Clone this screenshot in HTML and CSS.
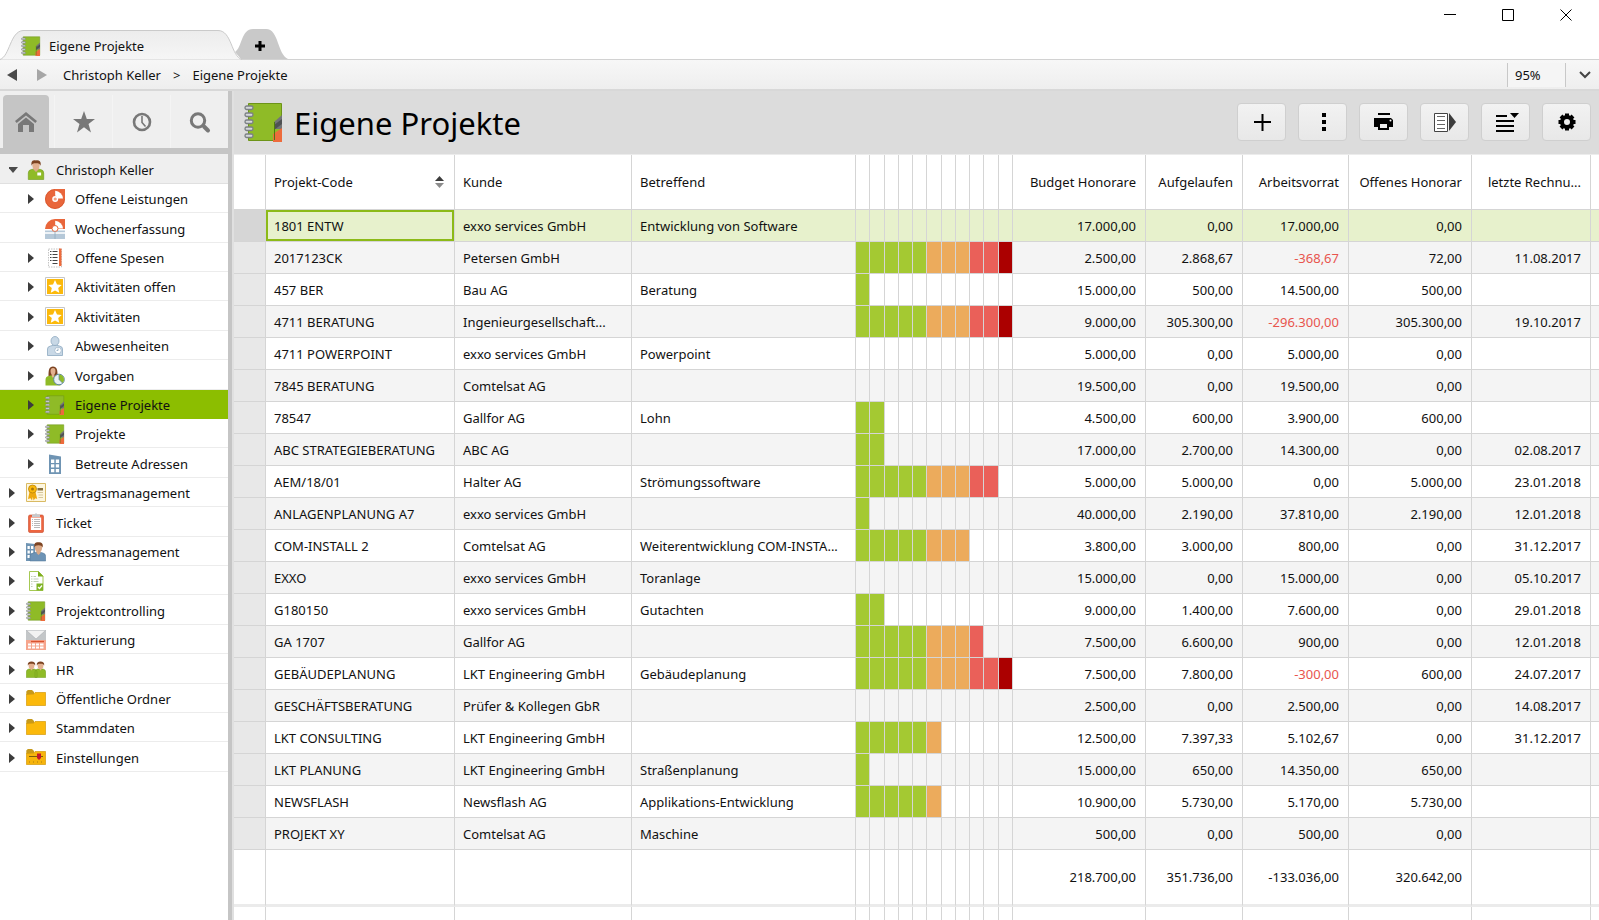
FILE: index.html
```html
<!DOCTYPE html>
<html lang="de">
<head>
    <meta charset="UTF-8">
    <meta name="viewport" content="width=device-width, initial-scale=1.0">
    <title>Eigene Projekte</title>
    <link rel="stylesheet" href="styles.css">
</head>
<body>
    <!-- Icon sprite -->
    <svg class="sprite" aria-hidden="true">
        <symbol id="i-book" viewBox="0 0 40 40">
            <path fill="#8fbb27" stroke="#6d9418" d="M4.500 1.500h33v37h-33z"/>
            <path fill="#737577" d="M38 13v14h-8v-7z"/>
            <path fill="#4f5254" d="M38 17v5l-8 6v-5z"/>
            <path fill="#ed6b3c" d="M38 26v14h-9v-8z"/>
            <path fill="none" stroke="#4e7a10" d="M30.500 20v18"/>
            <g fill="#d5d8da" stroke="#7b8084" stroke-width="1.300">
                <rect x="1" y="4" width="8" height="3.500" rx="1.700"/>
                <rect x="1" y="11" width="8" height="3.500" rx="1.700"/>
                <rect x="1" y="18" width="8" height="3.500" rx="1.700"/>
                <rect x="1" y="25" width="8" height="3.500" rx="1.700"/>
                <rect x="1" y="32" width="8" height="3.500" rx="1.700"/>
            </g>
        </symbol>
        <symbol id="i-person" viewBox="0 0 20 20">
            <path fill="#8fbb27" stroke="#6f9a1a" stroke-width=".6" d="M2.300 19.500V13q0-3 3-3.500l3-.5h3.400l3 .5q3 .5 3 3.500v6.500z"/>
            <path fill="#dba987" d="M7.500 7h5v2.500L10 12 7.500 9.500z"/>
            <ellipse cx="10" cy="5.500" rx="3.600" ry="4.200" fill="#e2b08f"/>
            <path fill="#7c4321" d="M5.600 5.800C4.500-.5 8.500 0 10 .4c4-.6 5.400 2 4.400 5.400-.6-2-1.500-2.600-4.400-2.600s-3.800.6-4.400 2.600z"/>
            <path fill="#fff" d="M11.300 12.500h3.800v3h-3.800z"/>
        </symbol>
        <symbol id="i-pie" viewBox="0 0 20 20">
            <path fill="#e9663b" d="M10 0h10v10a10 10 0 1 1-10-10z"/>
            <path fill="#fff" d="M10.200 1.800A8.200 8.200 0 0 1 18 9.500h-5l-2.800-3z"/>
            <path fill="none" stroke="#cf4f27" stroke-width=".6" d="M10 .5a9.500 9.500 0 1 0 9.500 9.500"/>
            <circle cx="10.200" cy="10" r="3" fill="#fff"/>
            <circle cx="10.200" cy="10" r="1.600" fill="#f0a48a"/>
        </symbol>
        <symbol id="i-week" viewBox="0 0 20 20">
            <path fill="#e9663b" d="M10 0h10v10H0A10 10 0 0 1 10 0z"/>
            <path fill="#fff" d="M10.200 1.800A8.200 8.200 0 0 1 18 9.500h-5l-2.800-3z"/>
            <path fill="#b5c8d8" d="M0 10h20v10H0z"/>
            <path fill="#fff" d="M0 10h20v1.400H0zM0 13.200h20v1.600H0z"/>
            <circle cx="10" cy="9.500" r="3" fill="#fff" stroke="#e9663b"/>
            <path fill="none" stroke="#8fa9bd" stroke-width=".8" d="M10 12v8"/>
        </symbol>
        <symbol id="i-receipt" viewBox="0 0 20 20">
            <path fill="#fff" stroke="#b5b5b5" stroke-width=".8" stroke-dasharray="1.500 1" d="M3.500 1h13v18h-13z"/>
            <path fill="#ed6b3c" d="M14 .5h2.500V18H14z"/>
            <path stroke="#444" d="M5 3.500h1.500M7.500 3.500h5M5 6.500h1.500M7.500 6.500h5M5 9.500h1.500M7.500 9.500h5M5 12.500h1.500M7.500 12.500h5M7.500 15.500h5"/>
        </symbol>
        <symbol id="i-star" viewBox="0 0 20 20">
            <path fill="#fff" stroke="#c6c6c6" d="M.5.5h19v18H.5z"/>
            <path fill="#fbb90b" d="M2 2h16v15H2z"/>
            <path fill="#fff" d="m10 3 2 4.400 4.700.5-3.500 3.200 1 4.700L10 13.400l-4.200 2.400 1-4.700L3.300 7.900 8 7.400z"/>
        </symbol>
        <symbol id="i-absent" viewBox="0 0 20 20">
            <path fill="#c8d8e6" stroke="#8ea9c0" stroke-width=".8" d="M2.500 19.500V13q0-2.500 3-3l2.700-.7h3.600l2.700.7q3 .5 3 3v6.500z"/>
            <ellipse cx="10" cy="5" rx="4" ry="4.500" fill="#c8d8e6" stroke="#8ea9c0" stroke-width=".8"/>
            <circle cx="13" cy="14.500" r="3.300" fill="#fff" stroke="#9fb6ca" stroke-width=".8"/>
            <path fill="none" stroke="#8ea9c0" stroke-width=".9" d="M13 12.500v2h-1.500"/>
        </symbol>
        <symbol id="i-target" viewBox="0 0 20 20">
            <path fill="#7c4321" d="M3.500 10C3.500 4 4 .5 8 .5S12.500 4 12.500 10z"/>
            <path fill="#8fbb27" d="M.5 19.500V14q0-3.500 3-4l2-.5h5l2 .5q3 .5 3 4v5.500z"/>
            <path fill="#e2b08f" d="M5.500 5q0-3 2.500-3t2.500 3q0 2.500-1.300 4v1.500L8 12l-1.200-1.500V9Q5.500 7.500 5.500 5z"/>
            <circle cx="14" cy="13.500" r="5.300" fill="#e9f1f5" stroke="#5f86a0"/>
            <path fill="#8fbb27" d="M14 8.500a5 5 0 0 1 3.500 8.500L14 13.500z"/>
            <path fill="none" stroke="#5f86a0" stroke-width=".7" d="M14 9v4.500l3.500 3.500"/>
        </symbol>
        <symbol id="i-building" viewBox="0 0 20 20">
            <path fill="#6f94b3" d="m4 .5 12 2V20H4z"/>
            <path fill="#fff" d="M6 5.500h3.300V9H6zM10.800 5.500h3.300V9h-3.300zM6 10.300h3.300v3.200H6zM10.800 10.300h3.300v3.200h-3.300zM6 15h3.300v3.200H6zM10.800 15h3.300v3.200h-3.300z"/>
        </symbol>
        <symbol id="i-contract" viewBox="0 0 20 20">
            <path fill="#fdf6df" stroke="#d9ba63" d="M.5.5h19v18H.5z"/>
            <path fill="#eda80e" d="M3.500 9 2 16l2.500-.8L6 17.500l.8-3.500.8 3.500 1.600-2.300 2 .8L9.500 9z"/>
            <circle cx="6.500" cy="6" r="4" fill="#fbb90b" stroke="#b98309" stroke-width=".8"/>
            <circle cx="6.500" cy="6" r="1.500" fill="#a8770a"/>
            <path fill="#86703f" d="M11.500 5H17v2.500h-5.500z"/>
            <path stroke="#d6c69a" d="M11.500 9.500H17M12.500 12H17M12.500 14.500H17"/>
        </symbol>
        <symbol id="i-ticket" viewBox="0 0 20 20">
            <rect x="2.500" y="2" width="15" height="17.500" rx="1.500" fill="#ed6540" stroke="#c9492a" stroke-width=".6"/>
            <path fill="#fff" d="M4.800 4.500h10.400V17H4.800z"/>
            <path fill="#c5c9cc" d="M6 1.500h2.500L10 0l1.500 1.500H14V4H6z"/>
            <path stroke="#a7a7a7" stroke-width=".8" d="M6 6.500h1M8 6.500h6M6 8.500h1M8 8.500h6M6 10.500h1M8 10.500h6M6 12.500h1M8 12.500h6M8 14.500h6"/>
        </symbol>
        <symbol id="i-address" viewBox="0 0 20 20">
            <path fill="#6f94b3" d="m0 1 9 1v17H0z"/>
            <path fill="#fff" d="M1.500 4h2.300v3H1.500zM5 4h2.300v3H5zM1.500 8.500h2.300v3H1.500zM5 8.500h2.300v3H5zM1.500 13h2.300v3H1.500z"/>
            <path fill="#6d93b5" stroke="#4f7595" stroke-width=".5" d="M4 19v-4.500q0-3 3-3.500l3.500-1h3L17 11q2.700.5 2.700 3.500V19z"/>
            <ellipse cx="12.500" cy="5.500" rx="3.600" ry="4.500" fill="#dba987"/>
            <path fill="#dba987" d="M10.500 8.500h4V11l-2 2-2-2z"/>
            <path fill="#7c4321" d="M8.500 5.500C7.500-.5 11 0 12.500.3c3.500-.5 5 2 4 5.200-.6-1.600-1.400-2.300-4-2.300s-3.400.7-4 2.300z"/>
        </symbol>
        <symbol id="i-sale" viewBox="0 0 20 20">
            <path fill="#fff" stroke="#8fbb27" stroke-width=".8" d="M3.500.5h9L17 5v14.500H3.500z"/>
            <path fill="#7fae1d" d="M12 0v5.500h5.500z"/>
            <path stroke="#b8c7ad" stroke-width=".9" d="M5 5.500h1.500M7.500 5.500H10M5 8h1.500M7.500 8h5M5 10.500h1.500M7.500 10.500h5M5 13h1.500M5 15.500h1.500"/>
            <path fill="#7fb326" d="M10.500 12.500H17v7h-6.500z"/>
            <path fill="none" stroke="#fff" stroke-width="1.200" d="m12 16 1.500 1.500 2.500-3"/>
        </symbol>
        <symbol id="i-invoice" viewBox="0 0 20 20">
            <path fill="#f6a58d" d="M0 10h20v10H0z"/>
            <path fill="#f2f2f2" d="M0 0h20v10H0z"/>
            <path fill="#c3c6c8" d="m0 0 10 9L20 0v10H0z"/>
            <path fill="none" stroke="#a9adb0" stroke-width=".6" d="M.3.300h19.400L10 9z"/>
            <path stroke="#d9532f" stroke-width="1.300" d="M5 11.500h13"/>
            <path fill="#fff" d="M2 13.500h3v2H2zM6 13.500h3v2H6zM10 13.500h3v2h-3zM14 13.500h3.500v2H14zM2 16.500h3v2H2zM6 16.500h3v2H6zM10 16.500h3v2h-3zM14 16.500h3.500v2H14z"/>
        </symbol>
        <symbol id="i-hr" viewBox="0 0 20 20">
            <path fill="#8fbb27" stroke="#6f9a1a" stroke-width=".5" d="M.3 17.500V12q0-2.500 2.500-3h5.500Q11 9.500 11 12v5.500zM9 17.500V12q0-2.500 2.500-3h5.500q2.700.5 2.700 3v5.500z"/>
            <path fill="#e2b08f" d="M2.500 5.500Q2.500 2.500 5.500 2.500T8.500 5.500 6.800 9L5.500 10.500 4.200 9Q2.500 8 2.500 5.500zM11.500 5.500q0-3 3-3t3 3T15.800 9l-1.300 1.500L13.200 9q-1.700-1-1.700-3.500z"/>
            <path fill="#7c4321" d="M1.800 5.500C1.500 2.500 3 1.500 5.500 1.500s4 1 3.700 4C8.500 4 7.500 3.700 5.500 3.700S2.500 4 1.800 5.500zM10.800 5.500c-.3-3 1.200-4 3.700-4s4 1 3.700 4c-.7-1.500-1.700-1.800-3.700-1.800s-3 .3-3.700 1.800z"/>
        </symbol>
        <symbol id="i-folder" viewBox="0 0 20 20">
            <path fill="#c79a1b" d="M.3 4V2.500L1.800 1H6l2 2v3H.3z"/>
            <path fill="#fbb90b" stroke="#d39a0b" stroke-width=".7" d="M.4 5.500 8 5l1-1.500h10.600v13H.4z"/>
        </symbol>
        <symbol id="i-settings" viewBox="0 0 20 20">
            <path fill="#c79a1b" d="M.3 4V2.500L1.800 1H6l2 2v3H.3z"/>
            <path fill="#f6b40c" stroke="#d39a0b" stroke-width=".7" d="M.4 5.500 8 5l1-1.500h10.600v13H.4z"/>
            <path stroke="#7a5c0e" d="M3 8.500h14"/>
            <path stroke="#a87d10" stroke-dasharray="1 3" d="M3 14h14"/>
            <path fill="#c4172c" d="M11 5.500h4v4.500l-2 2-2-2z"/>
        </symbol>
        <symbol id="i-right" viewBox="0 0 12 12">
            <path fill="#3c3c3c" d="M0 1v10l6-5z"/>
        </symbol>
        <symbol id="i-down" viewBox="0 0 12 12">
            <path fill="#4a4a4a" d="M-1 3H9L4 9z"/>
        </symbol>
    </svg>

    <div class="app">
        <header class="titlebar">
            <div class="tabs">
                <a class="tab" href="#">
                    <svg class="tab-shape" width="244" height="30" viewBox="0 0 244 30">
                        <defs>
                            <linearGradient id="tabFill" x1="0" y1="0" x2="0" y2="1">
                                <stop offset="0" stop-color="#ececec"/>
                                <stop offset="1" stop-color="#f6f6f6"/>
                            </linearGradient>
                        </defs>
                        <path fill="url(#tabFill)" stroke="#cacaca" d="M0 29.500C10 26 10 1.500 23 .5H218c14 0 13 26 24 29"/>
                    </svg>
                    <svg class="icon" aria-hidden="true"><use href="#i-book"/></svg>
                    <span>Eigene Projekte</span>
                </a>
                <button class="tab-add" aria-label="Neuer Tab">
                    <svg width="54" height="30" viewBox="0 0 54 30">
                        <path fill="#c9c9c9" d="M0 23C7 19 6 0 18 0h13c13 0 11 25 22 30H6z"/>
                        <path stroke="#000" stroke-width="3" d="M20 17h10M25 12v10"/>
                    </svg>
                </button>
            </div>
            <div class="window-controls">
                <button aria-label="Minimieren"><svg width="13" height="13"><path d="M0 5.500h12"/></svg></button>
                <button aria-label="Maximieren"><svg width="13" height="13"><path d="M.5.500h11v11H.5z"/></svg></button>
                <button aria-label="Schließen"><svg width="13" height="13"><path d="m.5.500 11 11M11.500.5l-11 11"/></svg></button>
            </div>
        </header>

        <nav class="breadcrumb">
            <button class="history" aria-label="Zurück"><svg width="10" height="12"><path fill="#4a4a4a" d="M10 0v12L0 6z"/></svg></button>
            <button class="history" aria-label="Vorwärts"><svg width="10" height="12"><path fill="#a6a6a6" d="M0 0v12l10-6z"/></svg></button>
            <a class="crumb" href="#">Christoph Keller</a>
            <span class="crumb-sep">&gt;</span>
            <a class="crumb" href="#">Eigene Projekte</a>
            <input class="zoom-level" type="text" value="95%" aria-label="Zoom">
            <button class="zoom-open" aria-label="Zoom wählen"><svg width="12" height="8"><path fill="none" stroke="#444" stroke-width="2" d="m1 1 5 5 5-5"/></svg></button>
        </nav>

        <div class="workspace">
            <aside class="sidebar">
                <div class="modes">
                    <button class="mode active" aria-label="Start">
                        <svg width="24" height="24" fill="#787878"><path d="m12 2 11 9-1.700 2L12 5.500 2.700 13 1 11z"/><path d="m4 14 8-6.500 8 6.500v8h-5v-7H9v7H4z"/></svg>
                    </button>
                    <button class="mode" aria-label="Favoriten">
                        <svg width="24" height="24" fill="#787878"><path d="m12 1 2.800 8H23l-6.500 5 2.500 8.500-7-5.200-7 5.200L7.500 14 1 9h8.200z"/></svg>
                    </button>
                    <button class="mode" aria-label="Verlauf">
                        <svg width="24" height="24" fill="none" stroke="#787878"><circle cx="12" cy="12" r="8" stroke-width="2.600"/><path stroke-width="1.600" d="M12 6v6.500l3.500 4"/></svg>
                    </button>
                    <button class="mode" aria-label="Suche">
                        <svg width="24" height="24" fill="none" stroke="#787878"><circle cx="10" cy="10.500" r="6.700" stroke-width="3"/><path stroke-width="4" stroke-linecap="round" d="m16 16.500 4 4"/></svg>
                    </button>
                </div>
                <ul class="tree" id="tree"></ul>
            </aside>

            <main class="content">
                <div class="page-head">
                    <svg class="page-icon" aria-hidden="true"><use href="#i-book"/></svg>
                    <h1>Eigene Projekte</h1>
                    <div class="tools">
                        <button aria-label="Neu"><svg width="24" height="24"><path stroke="#000" stroke-width="2" d="M4 12h17M12.500 4v17"/></svg></button>
                        <button aria-label="Mehr"><svg width="24" height="24"><path d="M11 3h4v4h-4zM11 10h4v4h-4zM11 17h4v4h-4z"/></svg></button>
                        <button aria-label="Drucken"><svg width="24" height="24"><path d="M6 3h12v2H6zM2 8h17l2 2v7h-4v-3H6v3H2z"/><path fill="#eee" stroke="#000" stroke-width="2" d="M7 13h9v6H7z"/><circle cx="18.500" cy="10.500" r="1" fill="#fff"/></svg></button>
                        <button aria-label="Export"><svg width="24" height="24"><path fill="#fff" stroke="#444" d="M1.500 3.500h13v18h-13z"/><path stroke="#666" d="M4 6.500h8M4 10.500h8M4 14.500h8M4 18.500h8"/><path fill="#3c3c3c" d="m16 3 7 9-7 9z"/></svg></button>
                        <button aria-label="Ansicht"><svg width="24" height="24"><path stroke="#000" stroke-width="2" d="M2 6h11M2 11h18M2 16h18M2 21h18"/><path d="M16 3h9l-4.500 5z"/></svg></button>
                        <button aria-label="Einstellungen"><svg width="24" height="24"><circle cx="12" cy="12" r="5" fill="none" stroke="#000" stroke-width="4"/><g stroke="#000" stroke-width="4"><path d="M12 3.500v3M12 17.500v3M3.500 12h3M17.500 12h3M6 6l2 2M16 16l2 2M18 6l-2 2M8 16l-2 2"/></g></svg></button>
                    </div>
                </div>

                <div class="grid-wrap">
                    <table class="grid">
                        <colgroup>
                            <col class="c-mark"><col class="c-code"><col class="c-kunde"><col>
                            <col class="c-bar"><col class="c-bar wide"><col class="c-bar"><col class="c-bar"><col class="c-bar"><col class="c-bar wide"><col class="c-bar"><col class="c-bar"><col class="c-bar"><col class="c-bar wide"><col class="c-bar">
                            <col class="c-budget"><col class="c-spent"><col class="c-stock"><col class="c-open"><col class="c-date"><col class="c-end">
                        </colgroup>
                        <thead>
                            <tr>
                                <td></td>
                                <th class="sorted">
                                    <button>Projekt-Code
                                        <svg width="9" height="12"><path fill="#3c3c3c" d="M0 5h9L4.500 0z"/><path fill="#8c8c8c" d="M0 7h9l-4.500 5z"/></svg>
                                    </button>
                                </th>
                                <th>Kunde</th>
                                <th>Betreffend</th>
                                <td></td><td></td><td></td><td></td><td></td><td></td><td></td><td></td><td></td><td></td><td></td>
                                <th class="num">Budget Honorare</th>
                                <th class="num">Aufgelaufen</th>
                                <th class="num">Arbeitsvorrat</th>
                                <th class="num">Offenes Honorar</th>
                                <th class="num">letzte Rechnu...</th>
                                <td></td>
                            </tr>
                        </thead>
                        <tbody id="rows"></tbody>
                        <tfoot>
                            <tr class="totals">
                                <td></td><td></td><td></td><td></td>
                                <td></td><td></td><td></td><td></td><td></td><td></td><td></td><td></td><td></td><td></td><td></td>
                                <td class="num">218.700,00</td>
                                <td class="num">351.736,00</td>
                                <td class="num">-133.036,00</td>
                                <td class="num">320.642,00</td>
                                <td></td><td></td>
                            </tr>
                            <tr class="rest">
                                <td></td><td></td><td></td><td></td>
                                <td></td><td></td><td></td><td></td><td></td><td></td><td></td><td></td><td></td><td></td><td></td>
                                <td></td><td></td><td></td><td></td><td></td><td></td>
                            </tr>
                        </tfoot>
                    </table>
                </div>
            </main>
        </div>
    </div>

    <script>
        // level, icon, label, arrow
        const nodes = [
            [0, 'person', 'Christoph Keller', 'down'],
            [1, 'pie', 'Offene Leistungen', 'right'],
            [1, 'week', 'Wochenerfassung', ''],
            [1, 'receipt', 'Offene Spesen', 'right'],
            [1, 'star', 'Aktivitäten offen', 'right'],
            [1, 'star', 'Aktivitäten', 'right'],
            [1, 'absent', 'Abwesenheiten', 'right'],
            [1, 'target', 'Vorgaben', 'right'],
            [1, 'book', 'Eigene Projekte', 'right'],
            [1, 'book', 'Projekte', 'right'],
            [1, 'building', 'Betreute Adressen', 'right'],
            [0, 'contract', 'Vertragsmanagement', 'right'],
            [0, 'ticket', 'Ticket', 'right'],
            [0, 'address', 'Adressmanagement', 'right'],
            [0, 'sale', 'Verkauf', 'right'],
            [0, 'book', 'Projektcontrolling', 'right'],
            [0, 'invoice', 'Fakturierung', 'right'],
            [0, 'hr', 'HR', 'right'],
            [0, 'folder', 'Öffentliche Ordner', 'right'],
            [0, 'folder', 'Stammdaten', 'right'],
            [0, 'settings', 'Einstellungen', 'right']
        ];

        // code, kunde, betreffend, filled bars, budget, aufgelaufen, vorrat, offen, rechnung
        const projects = [
            ['1801 ENTW', 'exxo services GmbH', 'Entwicklung von Software', 0, '17.000,00', '0,00', '17.000,00', '0,00', ''],
            ['2017123CK', 'Petersen GmbH', '', 11, '2.500,00', '2.868,67', '-368,67', '72,00', '11.08.2017'],
            ['457 BER', 'Bau AG', 'Beratung', 1, '15.000,00', '500,00', '14.500,00', '500,00', ''],
            ['4711 BERATUNG', 'Ingenieurgesellschaft...', '', 11, '9.000,00', '305.300,00', '-296.300,00', '305.300,00', '19.10.2017'],
            ['4711 POWERPOINT', 'exxo services GmbH', 'Powerpoint', 0, '5.000,00', '0,00', '5.000,00', '0,00', ''],
            ['7845 BERATUNG', 'Comtelsat AG', '', 0, '19.500,00', '0,00', '19.500,00', '0,00', ''],
            ['78547', 'Gallfor AG', 'Lohn', 2, '4.500,00', '600,00', '3.900,00', '600,00', ''],
            ['ABC STRATEGIEBERATUNG', 'ABC AG', '', 2, '17.000,00', '2.700,00', '14.300,00', '0,00', '02.08.2017'],
            ['AEM/18/01', 'Halter AG', 'Strömungssoftware', 10, '5.000,00', '5.000,00', '0,00', '5.000,00', '23.01.2018'],
            ['ANLAGENPLANUNG A7', 'exxo services GmbH', '', 1, '40.000,00', '2.190,00', '37.810,00', '2.190,00', '12.01.2018'],
            ['COM-INSTALL 2', 'Comtelsat AG', 'Weiterentwicklung COM-INSTA...', 8, '3.800,00', '3.000,00', '800,00', '0,00', '31.12.2017'],
            ['EXXO', 'exxo services GmbH', 'Toranlage', 0, '15.000,00', '0,00', '15.000,00', '0,00', '05.10.2017'],
            ['G180150', 'exxo services GmbH', 'Gutachten', 2, '9.000,00', '1.400,00', '7.600,00', '0,00', '29.01.2018'],
            ['GA 1707', 'Gallfor AG', '', 9, '7.500,00', '6.600,00', '900,00', '0,00', '12.01.2018'],
            ['GEBÄUDEPLANUNG', 'LKT Engineering GmbH', 'Gebäudeplanung', 11, '7.500,00', '7.800,00', '-300,00', '600,00', '24.07.2017'],
            ['GESCHÄFTSBERATUNG', 'Prüfer & Kollegen GbR', '', 0, '2.500,00', '0,00', '2.500,00', '0,00', '14.08.2017'],
            ['LKT CONSULTING', 'LKT Engineering GmbH', '', 6, '12.500,00', '7.397,33', '5.102,67', '0,00', '31.12.2017'],
            ['LKT PLANUNG', 'LKT Engineering GmbH', 'Straßenplanung', 1, '15.000,00', '650,00', '14.350,00', '650,00', ''],
            ['NEWSFLASH', 'Newsflash AG', 'Applikations-Entwicklung', 6, '10.900,00', '5.730,00', '5.170,00', '5.730,00', ''],
            ['PROJEKT XY', 'Comtelsat AG', 'Maschine', 0, '500,00', '0,00', '500,00', '0,00', '']
        ];

        const barColor = (i) => i < 5 ? 'green' : i < 8 ? 'orange' : i < 10 ? 'red' : 'dark';
        const esc = (text) => text.replace('&', '&amp;');

        document.getElementById('tree').innerHTML = nodes.map(([level, icon, label, arrow], i) => {
            const toggle = arrow
                ? `<button class="toggle" aria-label="${label} aufklappen"><svg width="12" height="12"><use href="#i-${arrow}"/></svg></button>`
                : '<span class="toggle"></span>';
            const classes = ['node', level ? 'sub' : '', i === 0 ? 'root' : '', i === 8 ? 'selected' : ''];
            return `<li class="${classes.join(' ').trim()}">${toggle}<a href="#"><svg class="icon"><use href="#i-${icon}"/></svg>${label}</a></li>`;
        }).join('');

        document.getElementById('rows').innerHTML = projects.map((p) => {
            const [code, kunde, text, filled, ...values] = p;
            let bars = '';
            for (let i = 0; i < 11; i++) {
                bars += i < filled ? `<td class="${barColor(i)}"></td>` : '<td></td>';
            }
            const nums = values.map((v) => `<td class="num${v.startsWith('-') ? ' negative' : ''}">${v}</td>`).join('');
            return `<tr><td class="mark"></td><td>${code}</td><td>${esc(kunde)}</td><td>${text}</td>${bars}${nums}<td></td></tr>`;
        }).join('');
    </script>
</body>
</html>
```
FILE: styles.css
```css
* {
    box-sizing: border-box;
}

body {
    margin: 0;
    font-family: "Noto Sans", "Open Sans", sans-serif;
    font-size: 13px;
    color: #111;
    background: #fff;
    overflow: hidden;
}

a {
    color: inherit;
    text-decoration: none;
}

button {
    margin: 0;
    padding: 0;
    border: none;
    background: none;
    font: inherit;
    color: inherit;
    cursor: pointer;
}

svg {
    display: block;
    overflow: visible;
}

.sprite {
    position: absolute;
    width: 0;
    height: 0;
}

.icon {
    width: 20px;
    height: 20px;
    flex: none;
}

.app {
    display: flex;
    flex-direction: column;
    height: 100vh;
}

/* Title bar */
.titlebar {
    display: flex;
    justify-content: space-between;
    height: 60px;
    border-bottom: 1px solid #d2d2d2;
}

.tabs {
    display: flex;
    align-items: flex-end;
}

.tab {
    position: relative;
    display: flex;
    align-items: center;
    gap: 8px;
    width: 235px;
    height: 30px;
    padding: 2px 0 0 21px;
    margin-bottom: -1px;
    z-index: 1;
}

.tab-shape {
    position: absolute;
    left: 0;
    top: 0;
    z-index: -1;
}

.window-controls {
    display: flex;
    align-items: flex-start;
}

.window-controls button {
    display: flex;
    justify-content: center;
    width: 58px;
    padding-top: 9px;
}

.window-controls button:last-child {
    margin-right: 4px;
}

.window-controls path {
    fill: none;
    stroke: #000;
}

/* Breadcrumb */
.breadcrumb {
    display: flex;
    align-items: center;
    height: 31px;
    background: linear-gradient(#f7f7f7, #eee);
    border-bottom: 2px solid #d8d8d8;
}

.history {
    display: flex;
    justify-content: center;
    width: 30px;
    padding-right: 6px;
}

.crumb:first-of-type {
    padding-left: 3px;
}

.crumb-sep {
    padding: 0 12px;
}

.zoom-level {
    width: 59px;
    height: 24px;
    margin-left: auto;
    padding: 0 7px;
    border: 1px solid #c8c8c8;
    border-width: 0 1px;
    background: #f5f5f5;
    font: inherit;
    color: inherit;
}

.zoom-open {
    display: flex;
    justify-content: center;
    width: 33px;
    padding-left: 4px;
}

/* Sidebar */
.workspace {
    display: flex;
    flex: 1;
    min-height: 0;
}

.sidebar {
    flex: none;
    width: 234px;
    border-right: 2px solid #e0e0e0;
    box-shadow: inset -4px 0 #c5c5c5;
    padding-right: 4px;
}

.modes {
    display: grid;
    grid-template-columns: 54px repeat(3, 1fr);
    height: 63px;
    padding-top: 4px;
    background: #efefef;
    border-bottom: 6px solid #c5c5c5;
}

.mode {
    display: flex;
    align-items: center;
    justify-content: center;
    border-left: 1px solid #f4f4f4;
}

.mode.active {
    margin: 0 5px 0 3px;
    background: #c5c5c5;
    border: none;
    border-radius: 4px 4px 0 0;
}

.tree {
    margin: 0;
    padding: 0;
    list-style: none;
}

.node {
    display: flex;
    align-items: center;
    height: 29px;
    padding: 2px 0 0 9px;
    border-bottom: 1px solid #ececec;
}

.node:nth-child(5n+1),
.node:nth-child(5n+3) {
    height: 30px;
}

.node.sub {
    padding-left: 28px;
}

.node.root {
    background: #efefef;
    border-bottom-color: #e0e0e0;
}

.node.selected {
    background: #8cbe00;
    border-bottom-color: #8cbe00;
}

.node a {
    display: flex;
    align-items: center;
    gap: 10px;
}

.toggle {
    width: 17px;
}

/* Page header */
.content {
    display: flex;
    flex-direction: column;
    flex: 1;
    min-width: 0;
}

.page-head {
    display: flex;
    align-items: center;
    flex: none;
    height: 64px;
    padding: 0 8px 2px 10px;
    background: #dcdcdc;
    border-bottom: 1px solid #ececec;
}

.page-icon {
    width: 40px;
    height: 40px;
}

h1 {
    margin: 0 0 0 10px;
    padding-top: 2px;
    font-size: 31px;
    line-height: 40px;
    font-weight: 400;
    color: #000;
}

.tools {
    display: flex;
    gap: 12px;
    margin-left: auto;
}

.tools button {
    display: flex;
    align-items: center;
    justify-content: center;
    width: 49px;
    height: 38px;
    background: linear-gradient(#f2f2f2, #e8e8e8);
    border: 1px solid #cfcfcf;
    border-radius: 4px;
}

/* Project grid */
.grid-wrap {
    flex: 1;
    min-height: 0;
    overflow: hidden;
}

.grid {
    width: 100%;
    table-layout: fixed;
    border-collapse: separate;
    border-spacing: 0;
}

.c-mark { width: 32px; }
.c-code { width: 189px; }
.c-kunde { width: 177px; }
.c-bar { width: 14px; }
.c-bar.wide { width: 15px; }
.c-budget { width: 133px; }
.c-spent { width: 97px; }
.c-stock { width: 106px; }
.c-open { width: 123px; }
.c-date { width: 119px; }
.c-end { width: 8px; }

.grid th,
.grid td {
    padding: 0;
    border-right: 1px solid #d5d5d5;
    border-bottom: 1px solid #d5d5d5;
    font-weight: 400;
    text-align: left;
    white-space: nowrap;
}

.grid th:not(:empty),
.grid td:nth-child(-n+4):not(.mark) {
    padding-left: 8px;
}

.grid th.num,
.grid td.num {
    padding: 0 9px 0 0;
    text-align: right;
}

.grid tr > :last-child {
    border-right: none;
}

.grid thead tr {
    height: 55px;
}

.sorted button {
    display: flex;
    align-items: center;
    justify-content: space-between;
    width: 100%;
    padding-right: 10px;
}

.grid tbody tr {
    height: 32px;
}

.grid tbody tr:nth-child(even) {
    background: #f4f4f4;
}

.grid tbody tr:first-child {
    background: #e7f1cc;
}

.grid .mark {
    background: #e8e8e8;
}

.grid tr:first-child .mark {
    background: #d6d6d6;
}

.grid tbody tr:first-child td:nth-child(2) {
    box-shadow: inset 0 0 0 2px #8cba17;
}

.grid .green { background: #a4c932; }
.grid .orange { background: #ecab5c; }
.grid .red { background: #ea6059; }
.grid .dark { background: #ab0000; }

.grid .negative {
    color: #e8554e;
}

.grid .totals {
    height: 57px;
}

.grid .totals td {
    border-bottom: 3px solid #ebebeb;
}

/* column lines run on to the bottom edge */
.grid .rest {
    height: 100vh;
}

.grid .rest td {
    border-bottom: none;
}
```
